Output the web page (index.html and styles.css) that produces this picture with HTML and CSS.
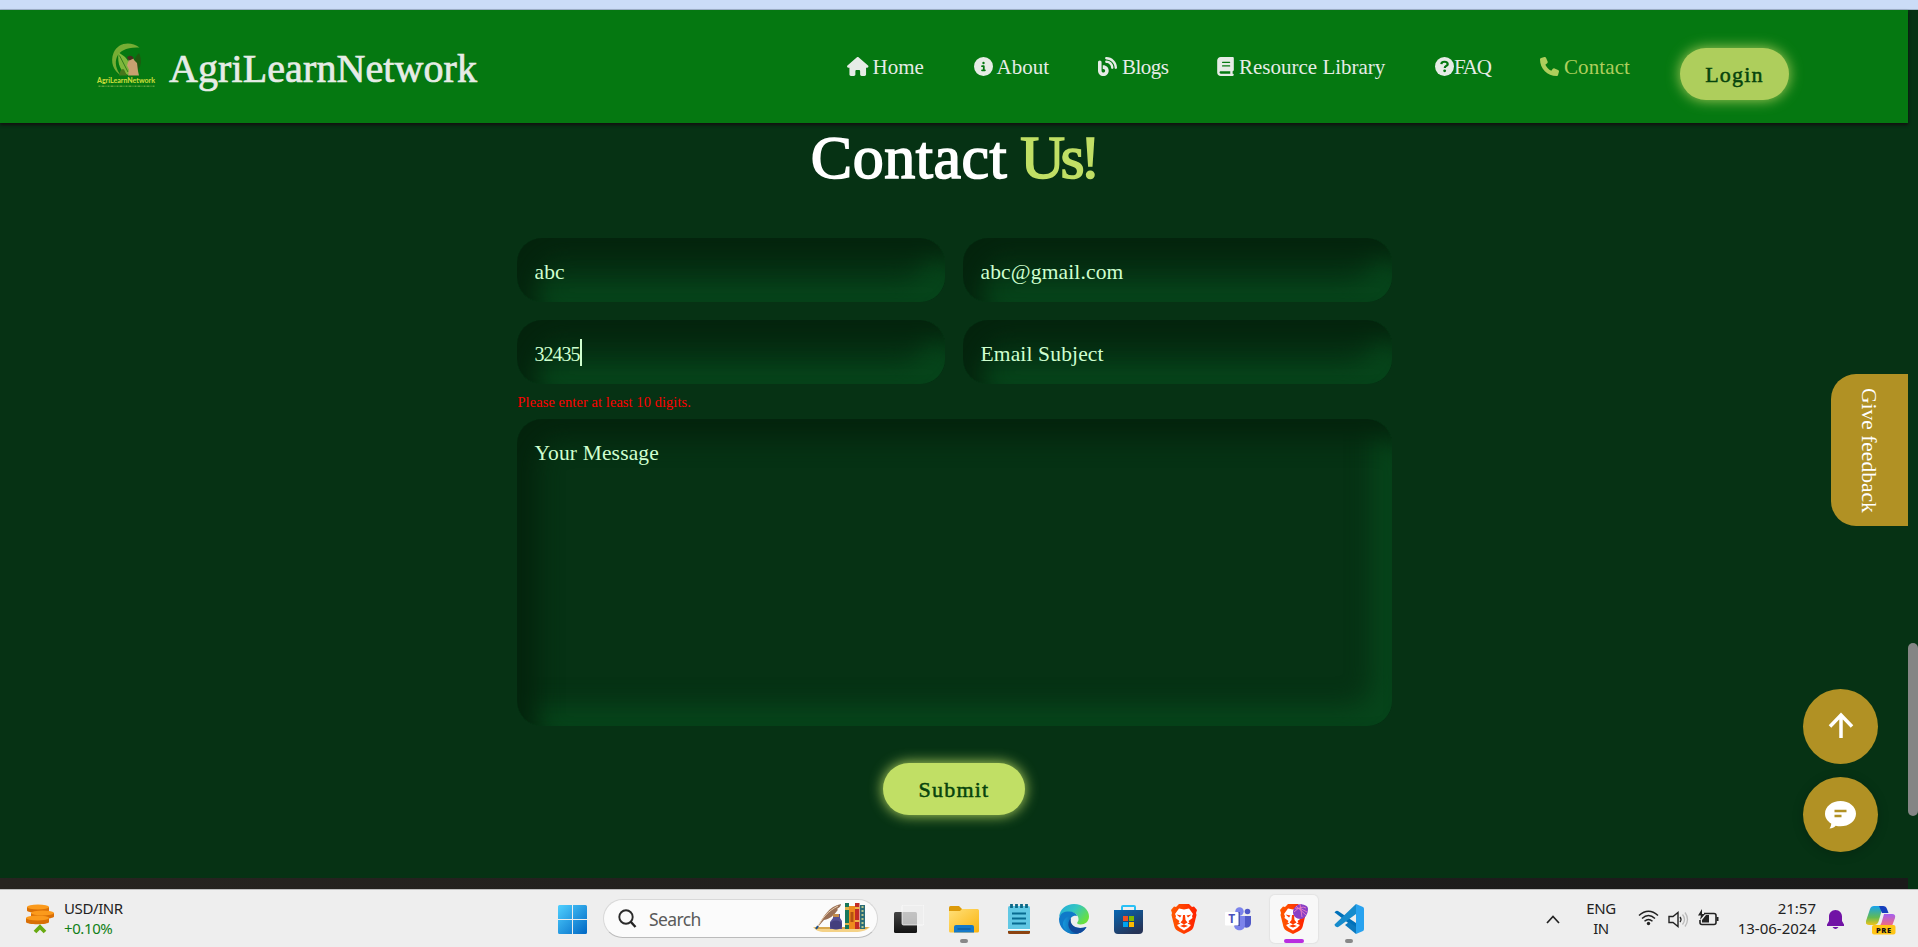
FILE: index.html
```html
<!DOCTYPE html>
<html lang="en">
<head>
<meta charset="utf-8">
<title>AgriLearnNetwork - Contact</title>
<link rel="stylesheet" href="styles.css">
</head>
<body>
<div class="screen">
  <div class="browser-edge"></div>
  <div class="viewport">
    <div class="page">
      <header class="header">
        <a class="brand">
          <svg class="brand-logo" width="64" height="48" viewBox="-2 0 64 48">
            <path d="M42.500 4.500C34-2 21-1 16.500 10c-3.500 9 0 18 7.500 22.500C14 20 18 3 42.500 4.500z" fill="#76ad34"/>
            <path d="M21.500 9.500C28 13 33 18 33 25c0 3-1 5-2 7-7-3-11-10-9.500-22.500z" fill="#7fb83c"/>
            <path d="M22.500 12.500 31 29" stroke="#1f6b14" stroke-width=".8"/>
            <path d="M42 10c3 7 3 14-4 20-3-7-2-14 4-20z" fill="#1f5a10"/>
            <path d="M32 16c2-2 5-1 5 1l3 3 1 8 1 4.500H31l1-6-2-4z" fill="#c9a070"/>
            <path d="M30 15c1-3 6-3 6.500.5l-4 2z" fill="#4a3020"/>
            <path d="M22 32.500c1-4 2-7 5-6l3 6z" fill="#47751b"/>
            <text x="0" y="40" class="logo-name" textLength="58" lengthAdjust="spacingAndGlyphs">AgriLearnNetwork</text>
            <path d="M1.500 43.300H58" stroke="#5ba03a" stroke-width="1.600" stroke-dasharray="2 1 3 1 1 1"/>
          </svg>
          <span class="brand-name">AgriLearnNetwork</span>
        </a>
        <nav class="nav">
          <a class="nav-link nav-home"><svg width="21.500" height="19" viewBox="0 0 576 512"><path d="M575.800 255.500c0 18-15 32.100-32 32.100h-32l.7 160.200c0 2.700-.2 5.400-.5 8.100V472c0 22.100-17.900 40-40 40H392c-22.100 0-40-17.900-40-40V384c0-17.700-14.300-32-32-32H256c-17.700 0-32 14.300-32 32v88c0 22.100-17.900 40-40 40H104c-22.100 0-40-17.900-40-40V287.600H32c-18 0-32-14-32-32.100 0-9 3-17 10-24L266.400 8c7-7 15-8 22-8s15 2 21 7L564.800 231.500c8 7 12 15 11 24z"/></svg><span>Home</span></a>
          <a class="nav-link nav-about"><svg width="19" height="19" viewBox="0 0 512 512"><path d="M256 512A256 256 0 1 0 256 0a256 256 0 1 0 0 512zM216 336h24V272H216c-13.300 0-24-10.700-24-24s10.700-24 24-24h48c13.300 0 24 10.700 24 24v88h8c13.300 0 24 10.700 24 24s-10.700 24-24 24H216c-13.300 0-24-10.700-24-24s10.700-24 24-24zm40-208a32 32 0 1 1 0 64 32 32 0 1 1 0-64z"/></svg><span>About</span></a>
          <a class="nav-link nav-blogs"><svg width="19" height="19" viewBox="0 0 512 512"><path d="M192 32c0 17.700 14.300 32 32 32c123.700 0 224 100.300 224 224c0 17.700 14.300 32 32 32s32-14.300 32-32C512 128.900 383.100 0 224 0c-17.700 0-32 14.300-32 32zm0 96c0 17.700 14.300 32 32 32c70.700 0 128 57.300 128 128c0 17.700 14.300 32 32 32s32-14.300 32-32c0-106-86-192-192-192c-17.700 0-32 14.300-32 32zM96 144c0-26.500-21.500-48-48-48S0 117.500 0 144V368c0 79.500 64.500 144 144 144s144-64.500 144-144s-64.500-144-144-144H128v96h16c26.500 0 48 21.500 48 48s-21.500 48-48 48s-48-21.500-48-48V144z"/></svg><span>Blogs</span></a>
          <a class="nav-link nav-library"><svg width="17" height="19" viewBox="0 0 448 512"><path d="M96 0C43 0 0 43 0 96V416c0 53 43 96 96 96H384h32c17.700 0 32-14.300 32-32s-14.300-32-32-32V384c17.700 0 32-14.300 32-32V32c0-17.700-14.300-32-32-32H384 96zm0 384H352v64H96c-17.700 0-32-14.300-32-32s14.300-32 32-32zm32-240c0-8.800 7.200-16 16-16H336c8.800 0 16 7.200 16 16s-7.200 16-16 16H144c-8.800 0-16-7.200-16-16zm16 80H336c8.800 0 16 7.200 16 16s-7.200 16-16 16H144c-8.800 0-16-7.200-16-16s7.200-16 16-16z"/></svg><span>Resource Library</span></a>
          <a class="nav-link nav-faq"><svg width="19" height="19" viewBox="0 0 512 512"><path d="M256 512A256 256 0 1 0 256 0a256 256 0 1 0 0 512z"/><path d="M170 190c5-40 36-62 84-62 56 0 88 24 88 66 0 48-78 46-78 100" fill="none" stroke="#057811" stroke-width="60"/><circle cx="260" cy="372" r="38" fill="#057811"/></svg><span>FAQ</span></a>
          <a class="nav-link nav-contact"><svg width="19" height="19" viewBox="0 0 512 512"><path d="M164.900 24.600c-7.700-18.600-28-28.500-47.400-23.200l-88 24C12.100 30.200 0 46 0 64C0 311.400 200.600 512 448 512c18 0 33.800-12.100 38.600-29.500l24-88c5.300-19.400-4.600-39.700-23.200-47.400l-96-40c-16.300-6.800-35.200-2.100-46.300 11.600L304.700 368C234.300 334.700 177.300 277.700 144 207.300L193.300 167c13.700-11.200 18.400-30 11.600-46.300l-40-96z"/></svg><span>Contact</span></a>
          <a class="button login">Login</a>
        </nav>
      </header>
      <main class="contact">
        <h1 class="title"><span class="title-main">Contact</span> <span class="title-accent">Us!</span></h1>
        <form class="form">
          <input class="field" value="abc" aria-label="Name">
          <input class="field" value="abc@gmail.com" aria-label="Email">
          <div class="field-wrap"><input class="field phone" value="32435" aria-label="Phone"><i class="caret"></i></div>
          <input class="field" placeholder="Email Subject">
          <p class="error">Please enter at least 10 digits.</p>
          <textarea class="field message" placeholder="Your Message"></textarea>
          <button type="button" class="button submit">Submit</button>
        </form>
      </main>
      <footer class="footer"></footer>
      <a class="feedback">Give feedback</a>
      <a class="round to-top"><svg width="26" height="27" viewBox="0 0 26 27"><path d="M13 26V3M2 14.500 13 3l11 11.500" fill="none" stroke="#fff" stroke-width="3.500"/></svg></a>
      <a class="round chat"><svg width="31" height="28" viewBox="0 0 31 28"><path d="M15.500 0C24 0 31 5.500 31 12.700S24 25.300 15.500 25.300c-1.700 0-3.300-.2-4.800-.6C9 26.400 7 27.500 4.500 27.500c1-1.300 1.700-3 1.700-5C2.400 20.200 0 16.700 0 12.700 0 5.500 7 0 15.500 0z" fill="#fff"/><path d="M9.500 10h12M9.500 15h7" stroke="#b19124" stroke-width="2.300"/></svg></a>
    </div>
    <div class="scrollbar"><div class="thumb"></div></div>
  </div>
  <div class="taskbar">
    <div class="widget">
      <svg width="29" height="30" viewBox="0 0 29 30">
        <g fill="#d96f06"><path d="M0 14h23v4c0 3-23 3-23 0z"/><path d="M5 9h23v3.500c0 3-23 3-23 0z"/><path d="M1 3h22v3.500c0 3-22 3-22 0z"/></g>
        <g fill="#fb9a1c"><ellipse cx="11.500" cy="14" rx="11.500" ry="2.600"/><ellipse cx="16.500" cy="9" rx="11.500" ry="2.600"/><ellipse cx="12" cy="3" rx="11" ry="2.600"/></g>
        <path d="m9 28 5-5 5 5" fill="none" stroke="#68aa12" stroke-width="3.800"/>
      </svg>
      <div class="rate"><span>USD/INR</span><span class="gain">+0.10%</span></div>
    </div>
    <div class="apps">
      <svg class="start" width="29" height="29" viewBox="0 0 29 29"><defs><linearGradient id="win" x2="1" y2="1"><stop stop-color="#4fd0ff"/><stop offset="1" stop-color="#0067c4"/></linearGradient></defs><path d="M0 1.500Q0 0 1.500 0H14v14H0zM15 0h12.500Q29 0 29 1.500V14H15zM0 15h14v14H1.500Q0 29 0 27.500zM15 15h14v12.500q0 1.500-1.500 1.500H15z" fill="url(#win)"/></svg>
      <div class="search">
        <svg width="19" height="19" viewBox="0 0 19 19"><circle cx="8" cy="8" r="6.700" fill="none" stroke="#2b2b2b" stroke-width="1.900"/><path d="m12.500 12.500 5 5.500" stroke="#222" stroke-width="2.400"/></svg>
        <span>Search</span>
        <svg class="search-art" width="57" height="31" viewBox="0 0 57 31">
          <path d="M0 24h57c-2 3-9 5-15 5H12c-6 0-10-2-12-5z" fill="#f5d287"/><path d="M1 24h55l-3 2H4z" fill="#d7a64c"/>
          <path d="M4 25C10 14 16 3 28 1c0 2-2 4-4 5 1 0 1 1 0 2-3 4-7 8-13 9z" fill="#9a7056"/><path d="M4 25C9 15 15 8 25 3" stroke="#e9cfae" fill="none"/><path d="m5 23-2 3" stroke="#1b4e88" stroke-width="2"/>
          <path d="M20 11h7v4l2 3v8H17v-7l3-4z" fill="#565094"/><path d="M20 11h6v3h-6z" fill="#c28b4b"/><ellipse cx="23" cy="22" rx="6" ry="4.500" fill="#443e7d"/>
          <path d="M32 0h4v26h-4z" fill="#16775a"/><path d="M32 4h4v3h-4zM32 20h4v2h-4z" fill="#d8b24d"/><path d="M36 3h6v23h-6z" fill="#ee8b1d"/><path d="M37.500 9v10h3V9z" fill="#b55112"/><path d="M42 0h4.500v26H42z" fill="#c32b25"/><path d="M42 4h4.500v2H42zM42 17h4.500v2H42z" fill="#efb348"/><path d="M47 2h5v24h-5z" fill="#2b6c77"/><path d="M49.500 3v22" stroke="#b9c58b" stroke-width="2" stroke-dasharray="2 2"/>
        </svg>
      </div>
      <div class="app"><svg width="30" height="28" viewBox="0 0 30 28"><defs><linearGradient id="tv" x2="0" y2="1"><stop stop-color="#454545"/><stop offset="1" stop-color="#121212"/></linearGradient></defs><rect y="7" width="23" height="21" rx="1.500" fill="url(#tv)"/><rect x="8" width="22" height="20" rx="1.500" fill="#ededed" fill-opacity=".75" stroke="#fff" stroke-opacity=".7"/></svg></div>
      <div class="app running"><svg width="30" height="27" viewBox="0 0 30 27"><defs><linearGradient id="fo" x2="1" y2="1"><stop stop-color="#ffe07a"/><stop offset="1" stop-color="#fbb40d"/></linearGradient></defs><path d="M0 1.500Q0 0 1.500 0H10l3 3v5H0z" fill="#dc9a0a"/><path d="M0 5h11l2-2h15.500Q30 3 30 4.500V25q0 1.500-1.500 1.500h-27Q0 26.500 0 25z" fill="url(#fo)"/><path d="M5 26.500V21q0-2 2-2h16q2 0 2 2v5.500z" fill="#1579c9"/><path d="M8.500 23h13" stroke="#0b508f"/></svg></div>
      <div class="app"><svg width="22" height="30" viewBox="0 0 22 30"><rect y="2" width="22" height="25" rx="1.500" fill="#61c8e4"/><path d="M0 25h22v1.500H0z" fill="#fff"/><path d="M0 27h22v1.500q0 1.500-1.500 1.500h-19Q0 30 0 28.500z" fill="#8c4310"/><path d="M4 9.500h14M4 14.500h14M4 19.500h14" stroke="#086b90" stroke-width="2"/><path d="M3.500 0v4M8.500 0v4M13.500 0v4M18.500 0v4" stroke="#0c6887" stroke-width="2.800"/></svg></div>
      <div class="app"><svg width="30" height="30" viewBox="0 0 30 30"><defs><linearGradient id="e1" y2=".6"><stop stop-color="#1fa8e0"/><stop offset=".5" stop-color="#35c6c0"/><stop offset="1" stop-color="#69e03f"/></linearGradient><linearGradient id="e2" x2="1"><stop stop-color="#1597db"/><stop offset="1" stop-color="#0c4f9e"/></linearGradient></defs><path d="M0 13C1 5 7 0 15 0c9 0 15 6 15 12.500 0 5-4 8-8.500 8-3 0-4-1-3-2.500 1-1 1-2 1-3 0-4-4-7-9-7-5 0-8 2-10.500 5z" fill="url(#e1)"/><path d="M0 15C1 9 5 7.500 10 7.500c4 0 7 2 8.500 4.500-5-1-8 2-7 6 1 5 7 7.500 16 5C25 27.500 20.500 30 15 30 6 30 0 23 0 15z" fill="#0f7ac9"/><path d="M12 12c-4 8 0 16 8 17-7 3-15-1-16-8-.5-4 3-9 8-9z" fill="url(#e2)"/><path d="M12 14c-2 7 5 12 15.500 9C25 27.500 21 29.500 18 29.500 9 28 7 19 12 14z" fill="#10489a"/></svg></div>
      <div class="app"><svg width="29" height="29" viewBox="0 0 29 29"><defs><linearGradient id="st" x2=".6" y2="1"><stop stop-color="#0767b3"/><stop offset="1" stop-color="#263457"/></linearGradient></defs><path d="M8 6V2q0-1 1-1h11q1 0 1 1v4" fill="none" stroke="#28c0f5" stroke-width="2"/><path d="M0 5h29v20q0 4-4 4H4q-4 0-4-4z" fill="url(#st)"/><path d="M9 11h5v5H9z" fill="#f25022"/><path d="M15 11h5v5h-5z" fill="#7fba00"/><path d="M9 17h5v5H9z" fill="#00a4ef"/><path d="M15 17h5v5h-5z" fill="#ffb900"/></svg></div>
      <div class="app"><svg width="26" height="30" viewBox="0 0 26 30"><defs><linearGradient id="br" x2="1"><stop stop-color="#ff5a00"/><stop offset="1" stop-color="#ff2000"/></linearGradient><g id="lion"><path d="M8 0h10l3 3 2-.5L26 6l-1 3 .5 2-3 12c-.6 2-2 3-3.500 4L13 30l-6-3c-1.500-1-2.900-2-3.500-4L.5 11 1 9 0 6l3-3.500 2 .5z" fill="url(#br)"/><path d="m8 4.500 5 1 5-1 4 5.500-1 2 .5 2-4 3 1 1.500-2 1L20 21l-3 3-4 2.500L9 24l-3-3 3.500-1.500-2-1 1-1.500-4-3 .5-2-1-2z" fill="#fff"/><path d="m5.500 10.500 5 1-1.500 2zM20.500 10.500l-5 1 1.500 2zM12 11h2l.5 5 2 2.500-3.500 2-3.500-2 2-2.500zM9 22l4-1.500 4 1.500-4 1.500z" fill="#ff3c00"/></g></defs><use href="#lion"/></svg></div>
      <div class="app"><svg width="27" height="24" viewBox="0 0 27 24"><circle cx="14.500" cy="4.500" r="4.200" fill="#7b83eb"/><circle cx="22.500" cy="4.500" r="2.800" fill="#5059c9"/><path d="M18 9h8v7c0 5-6 6-8 3z" fill="#5059c9"/><path d="M9 9h11v9c0 7-11 7-11 0z" fill="#7b83eb"/><path d="M11 5h4v14h-5z" fill="#3e469e" opacity=".75"/><rect y="5" width="13.500" height="13.500" rx="1" fill="#fff"/><text x="3.200" y="16" class="teams-letter">T</text></svg></div>
      <div class="app active"><svg width="28" height="30" viewBox="0 0 28 30"><use href="#lion"/><path d="M13 8c0-4 4-8 8-8 4 1 7 2 7 5 0 5-3 10-7.500 10S13 12 13 8z" fill="#8940c6"/><path d="M14 8q7-7 12-4M16 2l10 9M15 4q7 0 12 4M20 0l2 13" fill="none" stroke="#eb7fc2" stroke-width=".9"/></svg></div>
      <div class="app running"><svg width="30" height="30" viewBox="0 0 30 30"><path d="M2 9.500 22 25v-6L4 7Q2 6 .5 8.500z" fill="#0071ba"/><path d="M.5 20.500 22 0v10L5 22.500Q3 24 1 22z" fill="#168bcc"/><path d="m22 0 7 3q1 .5 1 2v20q0 1.500-1 2l-7 3z" fill="#28a2ef"/><path d="m22 30-11-9 4-3 7 5z" fill="#0d79bd"/></svg></div>
    </div>
    <div class="tray">
      <svg class="chevron" width="14" height="9" viewBox="0 0 14 9"><path d="m1 8 6-6.500L13 8" fill="none" stroke="#222" stroke-width="1.700"/></svg>
      <div class="lang"><span>ENG</span><span>IN</span></div>
      <svg class="wifi" width="21" height="16" viewBox="0 0 21 16"><g fill="none" stroke="#222" stroke-width="1.500"><path d="M1 5.500q9.500-8.500 19 0M4 8.500q6.500-6 13 0M6.500 11.300q4-3.500 8 0"/></g><circle cx="10.500" cy="13.500" r="1.700" fill="#222"/></svg>
      <svg class="volume" width="21" height="17" viewBox="0 0 21 17"><path d="M1 5.500h4l5-4v14l-5-4H1z" fill="none" stroke="#222" stroke-width="1.400"/><path d="M12 6q2 2.500 0 5" fill="none" stroke="#222" stroke-width="1.300"/><path d="M14.500 3.500q4 5 0 10M17 1.500q5 7 0 14" fill="none" stroke="#bbb" stroke-width="1.300"/></svg>
      <svg class="battery" width="21" height="18" viewBox="0 0 21 18"><path d="M6 4.500h10q2 0 2 2v7q0 2-2 2H4q-2 0-2-2V11" fill="none" stroke="#222" stroke-width="1.600"/><path d="M18.500 8h2v4h-2z" fill="#222"/><path d="M4 13.500V11l4-5h3v7.500z" fill="#222"/><path d="M4 0 0 6.500h3L2 11l5-6H4z" fill="#222"/></svg>
      <div class="clock"><span>21:57</span><span>13-06-2024</span></div>
      <svg class="bell" width="17" height="20" viewBox="0 0 17 20"><path d="M8.500 0c4 0 6.500 3 6.500 6.500V11l2 3.500V16H0v-1.500L2 11V6.500C2 3 4.500 0 8.500 0zM5.500 17h6q-3 4-6 0z" fill="#7113a5"/></svg>
      <svg class="copilot" width="30" height="29" viewBox="0 0 30 29"><defs><linearGradient id="c1" x2="0" y2="1"><stop stop-color="#16a3ee"/><stop offset=".6" stop-color="#62ba55"/><stop offset="1" stop-color="#f0c419"/></linearGradient><linearGradient id="c2" x2="0" y2="1"><stop stop-color="#a45ff0"/><stop offset="1" stop-color="#f66b7a"/></linearGradient></defs><path d="M8 0h9l-4 14q-1 5-5 5H3q-4 0-3-4L4 3q1-3 4-3z" fill="url(#c1)"/><path d="M13 0h4q3 0 4 3l1.500 4H16z" fill="#153fbd"/><path d="M18 8h8q4 0 3 4l-3 8H12q3 0 4-5z" fill="url(#c2)"/><rect x="6" y="19" width="23.500" height="9.500" rx="2" fill="#ffc516"/><text x="10" y="26.500" class="copilot-tag">PRE</text></svg>
    </div>
  </div>
</div>
</body>
</html>
```
FILE: styles.css
```css
* { box-sizing: border-box; }
body { margin: 0; overflow: hidden; background: #063214; font-family: "Liberation Serif", serif; }
.screen { display: grid; grid-template-rows: 10px 879px 58px; width: 1918px; height: 947px; }
.browser-edge { background: #cbdcf7; border-bottom: 1px solid #a3b5cd; }
.viewport { display: flex; }
.page { position: relative; display: flex; flex-direction: column; width: 1908px; }

.header { position: relative; display: flex; justify-content: space-between; flex: none; height: 113px; padding: 0 119px 0 95px; background: #057811; color: #e6ece6; box-shadow: 0 2px 3px rgba(20, 10, 15, .9); }
.brand { display: flex; gap: 10px; padding-top: 34px; }
.brand-logo { margin-top: -1px; overflow: visible; }
.logo-name { font: 900 7px Lato, sans-serif; fill: #c6dc3a; }
.brand-name { font-size: 40px; line-height: 50px; letter-spacing: .1px; -webkit-text-stroke: .7px; }
.nav { display: flex; gap: 50px; font-size: 21px; }
.nav-link { display: flex; gap: 4px; height: 28px; margin-top: 43px; line-height: 28px; white-space: nowrap; }
.nav-link svg { flex: none; margin-top: 4px; fill: currentColor; }
.nav-home { width: 76.500px; }
.nav-about { width: 74.500px; }
.nav-blogs { width: 69px; gap: 5px; letter-spacing: -.5px; }
.nav-library { width: 168px; gap: 5px; }
.nav-faq { width: 55px; gap: 0; letter-spacing: -1.300px; }
.nav-contact { width: 90px; gap: 5px; color: #aece5c; letter-spacing: .1px; }
.button { display: flex; align-items: center; justify-content: center; height: 52px; padding: 2px 0 0; border: 0; border-radius: 26px; color: #07440c; font: 22px "Liberation Serif", serif; letter-spacing: 1.200px; -webkit-text-stroke: .5px; }
.login { width: 109px; margin-top: 38px; background: #aece5c; box-shadow: 0 0 14px #aece5c; }

.contact { flex: 1; display: flex; flex-direction: column; align-items: center; }
.title { display: flex; gap: 13px; height: 81px; margin: 0; padding: 0 1px 0 0; color: #fff; font-size: 62px; font-weight: 400; line-height: 68px; -webkit-text-stroke: 1.600px; }
.title-main { letter-spacing: .5px; }
.title-accent { color: #c1df65; letter-spacing: -4.500px; }
.form { display: grid; grid-template-columns: 428px 429px; column-gap: 18px; width: 875px; margin-top: 34px; }
.field { display: block; width: 100%; height: 64px; margin: 0 0 18px; padding: 4px 18px 0 18px; border: 0; outline: 0; resize: none; border-radius: 25px; background: #063214; color: #cfffcf; font: 21.500px "Liberation Serif", serif; letter-spacing: .15px; box-shadow: inset 20px 20px 25px #04240d, inset -20px -20px 25px #07451b; }
.field::placeholder { color: #cfffcf; opacity: 1; }
.field-wrap { position: relative; }
.phone { padding-top: 4px; font-size: 20px; letter-spacing: -1px; }
.caret { position: absolute; left: 63px; top: 19px; width: 2px; height: 27px; background: #cfffcf; }
.error { grid-column: 1 / -1; height: 17px; margin: -8px 0 8px; padding-left: 1px; color: #f00; font-size: 14.400px; line-height: 17px; letter-spacing: .1px; }
.message { grid-column: 1 / -1; height: 307px; margin: 0; padding-top: 22px; }
.submit { grid-column: 1 / -1; justify-self: center; width: 142px; margin-top: 37px; background: #c1df65; box-shadow: 0 0 14px #c1df65; }
.footer { flex: none; height: 11px; background: linear-gradient(90deg, #272420, #1a1a1a); }

.feedback { position: absolute; right: 0; top: 364px; display: flex; align-items: center; justify-content: center; width: 77px; height: 152px; padding-right: 3px; border-radius: 25px 0 0 25px; background: #b19124; color: #fff; font-size: 21.500px; writing-mode: vertical-rl; }
.round { position: absolute; left: 1803px; display: flex; align-items: center; justify-content: center; width: 75px; height: 75px; border-radius: 50%; background: #b19124; }
.to-top { top: 679px; padding-bottom: 3px; }
.chat { top: 767px; box-shadow: 0 2px 12px rgba(0, 0, 0, .2); }
.scrollbar { width: 10px; padding-top: 633px; background: #063214; }
.thumb { height: 173px; border-radius: 5px; background: #858585; }

.taskbar { display: flex; border-top: 1px solid #bdbdbd; background: #eee; color: #222; font: 15px "Noto Sans", sans-serif; }
.taskbar svg { flex: none; }
.widget { display: flex; gap: 9px; width: 558px; padding: 14px 0 0 26px; }
.rate, .lang, .clock { display: flex; flex-direction: column; line-height: 20px; letter-spacing: -.4px; }
.rate { margin-top: -6px; }
.gain { color: #118017; }
.apps { display: flex; width: 988px; padding-top: 5px; }
.start { margin: 10px 16px 0 0; }
.search { display: flex; align-items: center; width: 275px; height: 39px; margin: 4px 3px 0 0; padding: 0 7px 0 14px; border: 1px solid #d8d8d8; border-bottom-color: #bbb; border-radius: 20px; background: #fbfbfb; color: #5a5a5a; font-size: 17.500px; letter-spacing: -.6px; }
.search span { margin-left: 12px; }
.search-art { margin-left: auto; }
.app { position: relative; display: flex; align-items: center; justify-content: center; width: 55px; height: 48px; }
.running::after { content: ""; position: absolute; left: 24px; bottom: 0; width: 8px; height: 4px; border-radius: 2px; background: #888; }
.active { width: 48px; margin: 0 3.500px; border-radius: 5px; background: #f8f8f8; box-shadow: 0 0 1px 1px #e3e3e3; }
.active::after { content: ""; position: absolute; left: 14px; bottom: 0; width: 20px; height: 4px; border-radius: 2px; background: #b92de0; }
.teams-letter { font: 700 12px "Open Sans", sans-serif; fill: #4b53bc; }
.tray { display: flex; align-items: flex-start; }
.chevron { margin-top: 25px; }
.lang { width: 40px; margin: 8px 17px 0 21px; align-items: center; }
.wifi { margin-top: 20px; }
.volume { margin: 21px 0 0 9px; }
.battery { margin: 19px 0 0 9px; }
.clock { width: 97px; margin-top: 8px; align-items: flex-end; letter-spacing: 0; }
.bell { margin: 20px 0 0 11px; }
.copilot { margin: 16px 0 0 22px; }
.copilot-tag { font: 800 7.500px "Open Sans", sans-serif; letter-spacing: .6px; fill: #111; }
```
